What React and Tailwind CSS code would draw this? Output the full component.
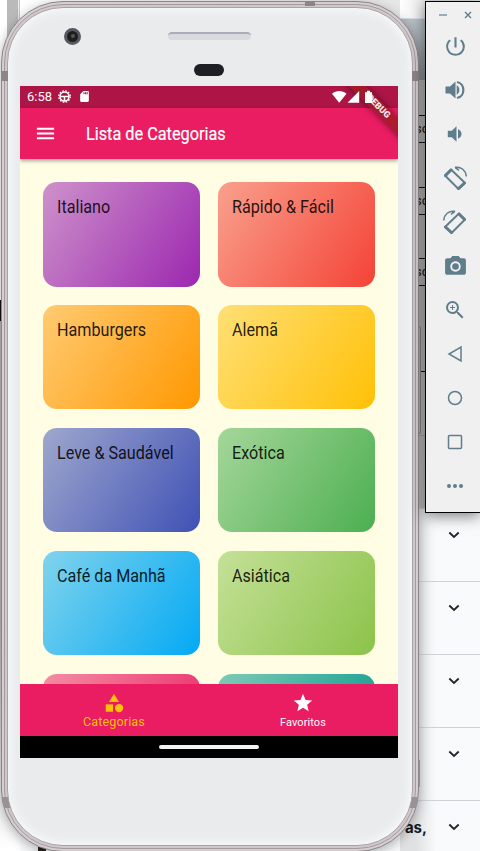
import React from "react";
import {
  MdPowerSettingsNew,
  MdPhotoCamera,
  MdZoomIn,
  MdCategory,
  MdStar,
  MdMenu,
  MdSdCard,
} from "react-icons/md";

const categories = [
  ["Italiano", "bg-[linear-gradient(123.6deg,#9c27b080,#9c27b0)]"],
  ["Rápido & Fácil", "bg-[linear-gradient(123.6deg,#f4433680,#f44336)]"],
  ["Hamburgers", "bg-[linear-gradient(123.6deg,#ff980080,#ff9800)]"],
  ["Alemã", "bg-[linear-gradient(123.6deg,#ffc10780,#ffc107)]"],
  ["Leve & Saudável", "bg-[linear-gradient(123.6deg,#3f51b580,#3f51b5)]"],
  ["Exótica", "bg-[linear-gradient(123.6deg,#4caf5080,#4caf50)]"],
  ["Café da Manhã", "bg-[linear-gradient(123.6deg,#03a9f480,#03a9f4)]"],
  ["Asiática", "bg-[linear-gradient(123.6deg,#8bc34a80,#8bc34a)]"],
  ["", "bg-[linear-gradient(123.6deg,#e91e6380,#e91e63)]"],
  ["", "bg-[linear-gradient(123.6deg,#00968880,#009688)]"],
];

function Chevron() {
  return (
    <svg width="12" height="8" viewBox="0 0 12 8" fill="none" stroke="#20242a" strokeWidth="1.8">
      <path d="M1.3 1.5 6 6l4.700-4.500" />
    </svg>
  );
}

function Field({ className }) {
  return (
    <div className={"flex h-[28px] shrink-0 items-center border-y border-[#111] pl-[15px] text-[13px] text-[#111] " + className}>
      sc
    </div>
  );
}

function Backdrop() {
  return (
    <div className="flex h-full bg-[#f7f9fb]">
      <div className="flex w-[20px] shrink-0 flex-col">
        <div className="flex h-[300px] shrink-0">
          <div className="w-[7px] bg-white" />
          <div className="w-[11px] bg-[#bababa]" />
          <div className="flex-1 border-r border-[#b9cbe0] bg-[#e9e9e9]" />
        </div>
        <div className="h-[21px] w-[2px] shrink-0 bg-[#111]" />
        <div className="h-[300px] shrink-0 bg-[#b9b9b9]" />
        <div className="flex-1 bg-linear-to-b from-[#b9b9b9] to-white" />
      </div>
      <div className="flex w-[380px] shrink-0 flex-col justify-between">
        <div className="h-[80px] bg-linear-to-r from-white to-[#e6e6e6]" />
        <div className="ml-[18px] h-[4px] w-[8px] bg-[#2a211c]" />
      </div>
      <div className="flex w-[80px] shrink-0 flex-col">
        <div className="h-[18px] shrink-0 bg-linear-to-r from-white to-[#e6e6e6] to-35%" />
        <div className="h-[62px] shrink-0 border-t border-[#d5dde3] bg-linear-to-b from-[#b9c1c6] to-[#899299]" />
        <div className="flex h-[428px] shrink-0 flex-col bg-linear-to-b from-[#b9b9b9] via-[#b6b6b6] to-[#c2c4c6]">
          <Field className="mt-[35px]" />
          <Field className="mt-[44px]" />
          <Field className="mt-[43px]" />
          <div className="mt-[40px] ml-[12px] h-[108px] w-[9px] shrink-0 rounded-[2px] border border-[#8b8b8b]">
            <div className="mt-[44px] ml-[8px] h-px w-[5px] bg-black" />
          </div>
          <div className="mt-px h-px shrink-0 bg-[#a5a8aa]" />
        </div>
        {[0, 1, 2, 3, 4].map((i) => (
          <div key={i} className="flex h-[73px] shrink-0 items-center justify-end border-t border-[#cdd2d7] bg-linear-to-r from-[#dfe1e3] from-20% to-[#f8fafc] to-45% pr-[20px] pb-[20px]">
            {i === 4 && <span className="mr-[21px] font-['Inter'] text-[15px] leading-none font-bold text-[#16191d]">as,</span>}
            <Chevron />
          </div>
        ))}
      </div>
    </div>
  );
}

function Phone() {
  return (
    <div className="absolute top-[1px] left-[1px] h-[851px] w-[417.500px] rounded-[62px] border border-[#8d8587] bg-[#d5cdd0] p-[2px] shadow-[0_3px_12px_rgba(0,0,0,0.3)]">
      <div className="h-full rounded-[59px] border border-[#a39b9e] bg-[#cfc8ca] p-[2px]">
        <div className="flex h-full flex-col rounded-[56px] border border-[#aaa3a5] bg-[#e9ebec] pl-[12px] shadow-[inset_0_0_10px_3px_#f7f8fb]">
          <div className="flex h-[78px] shrink-0 flex-col">
            <div className="flex h-[56px] items-center pl-[44px]">
              <div className="flex h-[17px] w-[17px] items-center justify-center rounded-full border-[3px] border-[#565a60] bg-[#1c1f22]">
                <div className="h-[4px] w-[4px] rounded-full bg-[#59583a]" />
              </div>
              <div className="ml-[87px] h-[8px] w-[83px] rounded-[4px] border-t-2 border-[#a9adba] bg-[#d8dadd]" />
            </div>
            <div className="ml-[174px] h-[12px] w-[30px] rounded-full bg-[#1d1f24]" />
          </div>
          <Screen />
        </div>
      </div>
      <div className="absolute top-[69px] left-0 h-[10px] w-[6px] bg-[#8d8487]" />
      <div className="absolute top-[69px] right-0 h-[10px] w-[6px] bg-[#8d8487]" />
      <div className="absolute -top-px left-[303px] h-[5px] w-[10px] bg-[#8d8487]" />
      <div className="absolute top-[795px] left-[1px] h-[11px] w-[6px] -skew-x-[-12deg] bg-[#9a9194]" />
      <div className="absolute top-[795px] right-[1px] h-[11px] w-[6px] skew-x-[-12deg] bg-[#9a9194]" />
      <div className="absolute top-[758px] -right-[2px] h-[27px] w-px bg-[#98918f]" />
    </div>
  );
}

function Screen() {
  return (
    <div className="relative flex h-[672px] w-[378px] shrink-0 flex-col overflow-hidden bg-[#fffee5]">
      <div className="flex h-[21.500px] shrink-0 items-center bg-[#ad1547] pl-[7px] text-white">
        <span className="w-[31px] text-[13px]">6:58</span>
        <svg width="13" height="13" viewBox="0 0 13 13" fill="none" stroke="white">
          <circle cx="6.500" cy="6.500" r="4.500" strokeWidth="1.500" />
          <circle cx="6.500" cy="6.500" r="5.700" strokeWidth="1.400" strokeDasharray="1.600 1.385" />
          <path d="M2 6.500h9M6.500 6.500v4.500" strokeWidth="1.500" />
        </svg>
        <MdSdCard className="ml-[7px]" size={13} />
        <svg className="relative z-30 mr-[24px] ml-auto" width="42" height="14" viewBox="0 0 42 14" fill="white">
          <path d="M0 3.800C4 .1 10.500 .1 14.500 3.800L7.200 12.800Z" />
          <path d="M27.200 1v11.700H15.500Z" />
          <path d="M35 .8h3v1.500h2v10.700h-7V2.300h2Z" />
        </svg>
      </div>
      <div className="z-10 flex h-[51.500px] shrink-0 items-center bg-[#ea1c62] pl-[14px] text-white shadow-[0_2px_4px_rgba(0,0,0,0.35)]">
        <MdMenu size={23} />
        <span className="ml-[29px] inline-block origin-left scale-x-[0.904] text-[18px] whitespace-nowrap [-webkit-text-stroke:0.2px_white]">Lista de Categorias</span>
      </div>
      <div className="grid h-[525px] shrink-0 auto-rows-[104.500px] grid-cols-2 gap-x-[18px] gap-y-[18.400px] overflow-hidden px-[23px] pt-[23px]">
        {categories.map(([name, fill], i) => (
          <div key={i} className={"rounded-[14px] px-[14px] pt-[11px] " + fill}>
            <span className="inline-block origin-left scale-x-[0.897] text-[18px] leading-[27px] whitespace-nowrap text-[#000000de]">{name}</span>
          </div>
        ))}
      </div>
      <div className="grid h-[51.500px] shrink-0 grid-cols-2 bg-[#ea1c62]">
        <div className="flex flex-col items-center pt-[8px] pr-[1px] text-[#ffc107]">
          <MdCategory size={22} />
          <span className="text-[12.500px] leading-[15px] tracking-[0.15px]">Categorias</span>
        </div>
        <div className="flex flex-col items-center pt-[8px] pr-[1px] text-white">
          <MdStar size={22} />
          <span className="mt-px text-[11px] leading-[15px] tracking-[0.1px]">Favoritos</span>
        </div>
      </div>
      <div className="flex flex-1 items-center justify-center bg-black">
        <div className="h-[4px] w-[100px] rounded-full bg-[#f3f3f3]" />
      </div>
      <div className="absolute top-[14.500px] right-[-28px] z-20 flex h-[12px] w-[96px] rotate-45 items-center justify-center bg-[#a01b24d9] text-[9px] font-black text-[#fbe8ea] shadow-[0_0_6px_rgba(0,0,0,0.5)]">
        DEBUG
      </div>
    </div>
  );
}

function RotateIcon({ flip }) {
  return (
    <svg className={flip ? "-scale-x-100" : ""} width="24" height="24" viewBox="0 0 24 24" fill="none" stroke="#607d8b">
      <path d="M8 3.500 22 17 15.500 23 2 9.500Z" strokeWidth="1.900" strokeLinejoin="round" />
      <path d="M8 4 2.500 9.500M21.500 17 15.500 22.500" strokeWidth="3" strokeLinecap="round" />
      <path d="M12 1.300C18 .3 23 4.500 23.300 10.500M12 1.300l4 3" strokeWidth="1.500" />
    </svg>
  );
}

const volumeHigh = (
  <svg width="24" height="24" viewBox="0 0 24 24" fill="#607d8b">
    <path d="M2.500 8.500v7H7l5.500 5V3.500L7 8.500Z" />
    <path d="M13.700 7.300c3.600 1.800 3.600 7.600 0 9.400Z" />
    <path d="M14 4c8.500 1.500 8.500 14.500 0 16" fill="none" stroke="#607d8b" strokeWidth="2.200" />
  </svg>
);

const volumeLow = (
  <svg width="24" height="24" viewBox="0 0 24 24" fill="#607d8b">
    <path d="M4.800 8.800v6.400h4l4.700 4.600V4.200L8.800 8.800Z" />
    <path d="M15 7.300c4.700 1.800 4.700 7.600 0 9.400Z" />
  </svg>
);

const tools = [
  <MdPowerSettingsNew size={25} />,
  volumeHigh,
  volumeLow,
  <RotateIcon />,
  <RotateIcon flip />,
  <MdPhotoCamera size={25} />,
  <MdZoomIn size={24} />,
  <svg width="16" height="18" viewBox="0 0 16 18" fill="none" stroke="#607d8b" strokeWidth="1.500"><path d="M14 2v14L2 9Z" /></svg>,
  <svg width="16" height="16" viewBox="0 0 16 16" fill="none" stroke="#607d8b" strokeWidth="1.500"><circle cx="8" cy="8" r="6.500" /></svg>,
  <svg width="16" height="16" viewBox="0 0 16 16" fill="none" stroke="#607d8b" strokeWidth="1.500"><rect x="1.500" y="1.500" width="13" height="13" rx="1" /></svg>,
  <svg width="18" height="6" viewBox="0 0 18 6" fill="#607d8b"><circle cx="3" cy="3" r="2" /><circle cx="9" cy="3" r="2" /><circle cx="15" cy="3" r="2" /></svg>,
];

function Toolbar() {
  return (
    <div className="absolute top-[1px] left-[425px] h-[512px] w-[55px] border border-r-0 border-black bg-[#f0f0f0] text-[#607d8b] shadow-[0_3px_14px_rgba(0,0,0,0.5)]">
      <div className="flex h-[22px] items-center pt-[4px] pl-[13px]">
        <div className="h-[1.500px] w-[8px] bg-[#9aadb6]" />
        <svg className="ml-[17px]" width="8" height="8" viewBox="0 0 8 8" stroke="#607d8b" strokeWidth="1.400"><path d="M1 1l6 6M7 1 1 7" /></svg>
      </div>
      {tools.map((icon, i) => (
        <div key={i} className="flex h-[44px] w-[58px] items-center justify-center">{icon}</div>
      ))}
    </div>
  );
}

export default function App() {
  return (
    <div className="relative h-[851px] w-[480px] overflow-hidden font-['Roboto',sans-serif]">
      <Backdrop />
      <Phone />
      <Toolbar />
    </div>
  );
}
